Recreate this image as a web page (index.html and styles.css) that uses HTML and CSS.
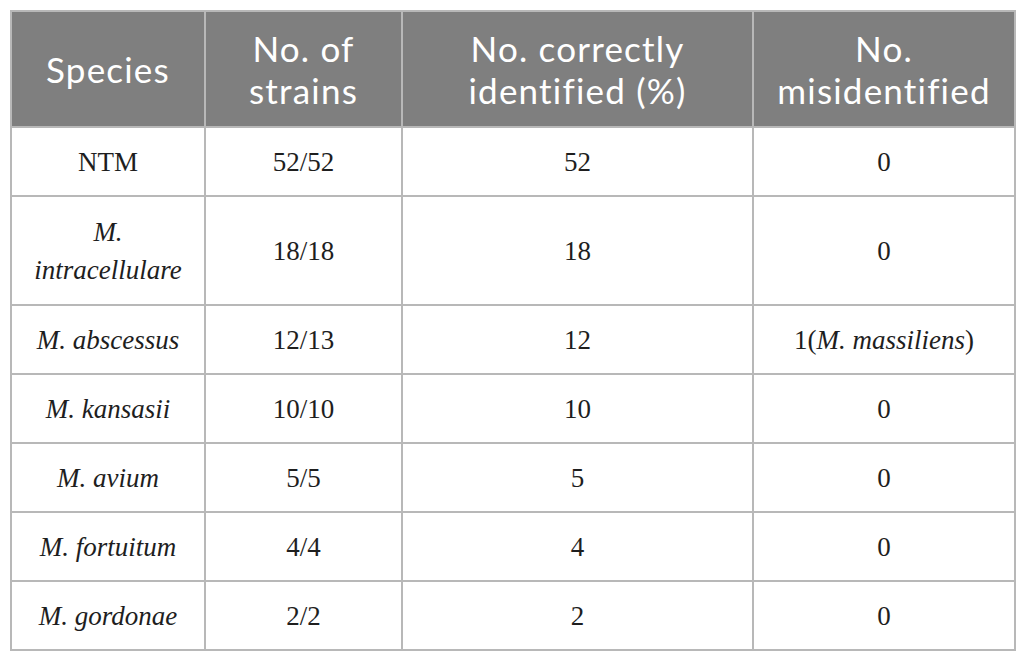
FILE: index.html
```html
<!DOCTYPE html>
<html>
<head>
<meta charset="utf-8">
<link rel="stylesheet" href="styles.css">
</head>
<body>
<table class="data">
  <colgroup>
    <col class="c1"><col class="c2"><col class="c3"><col class="c4">
  </colgroup>
  <thead>
    <tr class="head">
      <th>Species</th>
      <th>No. of<br>strains</th>
      <th>No. correctly<br>identified (%)</th>
      <th>No.<br>misidentified</th>
    </tr>
  </thead>
  <tbody>
    <tr class="r"><td>NTM</td><td>52/52</td><td>52</td><td>0</td></tr>
    <tr class="r tall"><td><i>M.<br>intracellulare</i></td><td>18/18</td><td>18</td><td>0</td></tr>
    <tr class="r"><td><i>M. abscessus</i></td><td>12/13</td><td>12</td><td>1(<i>M. massiliens</i>)</td></tr>
    <tr class="r"><td><i>M. kansasii</i></td><td>10/10</td><td>10</td><td>0</td></tr>
    <tr class="r"><td><i>M. avium</i></td><td>5/5</td><td>5</td><td>0</td></tr>
    <tr class="r"><td><i>M. fortuitum</i></td><td>4/4</td><td>4</td><td>0</td></tr>
    <tr class="r"><td><i>M. gordonae</i></td><td>2/2</td><td>2</td><td>0</td></tr>
  </tbody>
</table>
</body>
</html>
```
FILE: styles.css
```css
html, body {
  margin: 0;
  padding: 0;
  background: #ffffff;
}
body {
  padding: 10px 0 0 10px;
}
.data {
  border-collapse: collapse;
  table-layout: fixed;
  width: 1004px;
}
.c1 { width: 194px; }
.c2 { width: 197px; }
.c3 { width: 351px; }
.c4 { width: 262px; }
.data th, .data td {
  border: 2px solid #b8b8b8;
  text-align: center;
  vertical-align: middle;
  padding: 0 4px;
}
.head th {
  background: #7f7f7f;
  color: #ffffff;
  font-family: Lato, "Open Sans", sans-serif;
  font-weight: 400;
  font-size: 35px;
  letter-spacing: 1.2px;
  line-height: 42px;
  height: 114px;
  padding: 0 4px;
}
.r td {
  font-family: "Liberation Serif", "DejaVu Serif", serif;
  font-size: 27px;
  line-height: 38px;
  color: #1e1e1e;
  height: 67px;
}
.r.tall td {
  height: 107px;
}
```
